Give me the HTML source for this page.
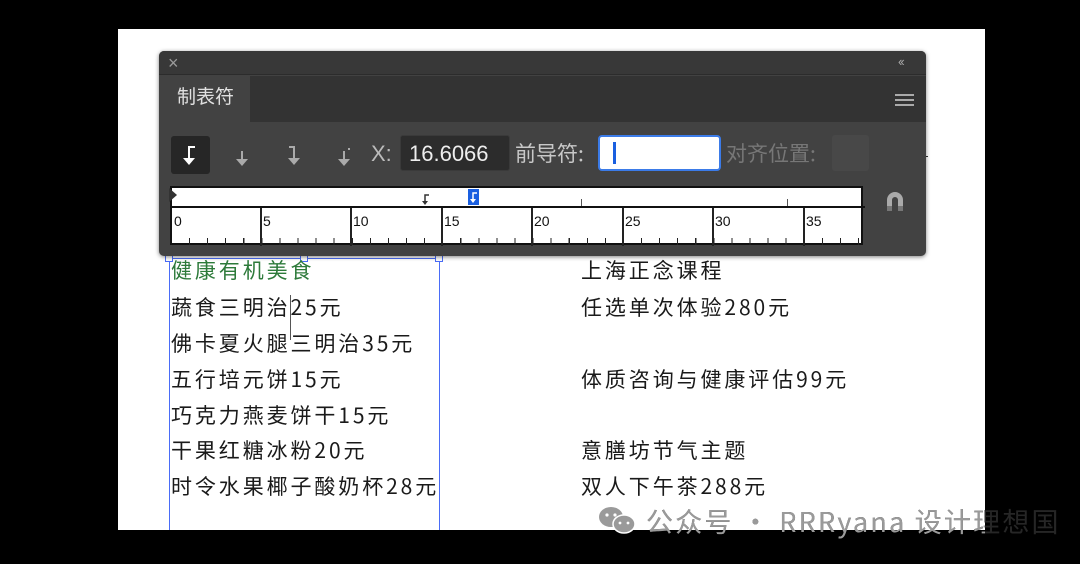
<!DOCTYPE html>
<html><head><meta charset="utf-8"><style>
*{margin:0;padding:0;box-sizing:border-box}
body{width:1080px;height:564px;background:#000;position:relative;overflow:hidden;font-family:"Liberation Sans","Noto Sans CJK SC",sans-serif}
.a{position:absolute}
.page{left:118px;top:29px;width:867px;height:501px;background:#fff}
.panel{left:159px;top:51px;width:767px;height:205px;background:#424242;border-radius:5px;overflow:hidden;box-shadow:0 1px 4px rgba(0,0,0,.5)}
.t{font-family:"Noto Sans CJK SC",sans-serif;font-size:21px;letter-spacing:2.9px;color:#1a1a1a;white-space:nowrap;line-height:24px}
.maj{position:absolute;top:0;width:2px;height:38px;background:#222}
.lab{position:absolute;top:5px;font-size:14px;color:#111}
.wm{position:absolute;left:646px;top:502px;font-family:'Noto Sans CJK SC',sans-serif;font-size:27px;line-height:38px;white-space:nowrap;letter-spacing:2.2px}
</style></head><body>
<div class="a page"></div>
<div class="a" style="left:918px;top:156px;width:10px;height:1px;background:#333"></div>

<div class="a" style="left:169px;top:258px;width:271px;height:272px;border:1px solid #4a6cf7;border-bottom:none"></div>
<div class="a" style="left:165px;top:254px;width:8px;height:8px;border:1px solid #4a6cf7;background:#fff"></div>
<div class="a" style="left:300px;top:254px;width:8px;height:8px;border:1px solid #4a6cf7;background:#fff"></div>
<div class="a" style="left:435px;top:254px;width:8px;height:8px;border:1px solid #4a6cf7;background:#fff"></div>
<div class="a" style="left:290px;top:295px;width:1px;height:45px;background:#555"></div>

<div class="a t" style="left:171px;top:258px;color:#2d7a3a">健康有机美食</div>
<div class="a t" style="left:171px;top:295px">蔬食三明治25元</div>
<div class="a t" style="left:171px;top:331px">佛卡夏火腿三明治35元</div>
<div class="a t" style="left:171px;top:367px">五行培元饼15元</div>
<div class="a t" style="left:171px;top:403px">巧克力燕麦饼干15元</div>
<div class="a t" style="left:171px;top:438px">干果红糖冰粉20元</div>
<div class="a t" style="left:171px;top:474px">时令水果椰子酸奶杯28元</div>

<div class="a t" style="left:581px;top:258px">上海正念课程</div>
<div class="a t" style="left:581px;top:295px">任选单次体验280元</div>
<div class="a t" style="left:581px;top:367px">体质咨询与健康评估99元</div>
<div class="a t" style="left:581px;top:438px">意膳坊节气主题</div>
<div class="a t" style="left:581px;top:474px">双人下午茶288元</div>

<svg class="a" style="left:597px;top:505px" width="42" height="30" viewBox="0 0 42 30"><ellipse cx="14" cy="12" rx="12" ry="10" fill="#9a9a9a"/><ellipse cx="27" cy="19" rx="11" ry="9" fill="#9a9a9a" stroke="#fff" stroke-width="1.5"/><circle cx="10" cy="10" r="1.6" fill="#fff"/><circle cx="18" cy="10" r="1.6" fill="#fff"/><circle cx="23" cy="18" r="1.4" fill="#fff"/><circle cx="31" cy="18" r="1.4" fill="#fff"/></svg>
<div class="wm" style="color:#262626">公众号 · RRRyana 设计理想国</div>
<div class="a" style="left:0;top:0;width:985px;height:564px;overflow:hidden">
  <div class="wm" style="color:#9a9a9a">公众号 · RRRyana 设计理想国</div>
</div>

<div class="a panel">
  <div class="a" style="left:0;top:0;width:767px;height:24px;background:#383838;border-bottom:1px solid #2c2c2c"></div>
  <div class="a" style="left:9px;top:2px;font-size:18px;color:#9a9a9a">×</div>
  <div class="a" style="left:739px;top:3px;font-size:13px;color:#aaa;letter-spacing:-2px">‹‹</div>
  <div class="a" style="left:0;top:25px;width:767px;height:46px;background:#333"></div>
  <div class="a" style="left:0;top:25px;width:91px;height:47px;background:#424242"></div>
  <div class="a" style="left:18px;top:31px;font-family:'Noto Sans CJK SC',sans-serif;font-size:19px;color:#e0e0e0">制表符</div>
  <div class="a" style="left:736px;top:43px;width:19px;height:2px;background:#aaa;box-shadow:0 5px 0 #aaa,0 10px 0 #aaa"></div>

  <div class="a" style="left:12px;top:85px;width:39px;height:38px;background:#262626;border-radius:3px"></div>
  <svg class="a" style="left:20px;top:90px" width="24" height="28" viewBox="0 0 24 28"><path d="M10 20V6h6" stroke="#fff" stroke-width="2" fill="none"/><path d="M4 17h12l-6 7z" fill="#fff"/></svg>
  <svg class="a" style="left:71px;top:90px" width="24" height="28" viewBox="0 0 24 28"><path d="M12 10v10" stroke="#aaa" stroke-width="2"/><path d="M6 18h12l-6 7z" fill="#aaa"/></svg>
  <svg class="a" style="left:123px;top:90px" width="24" height="28" viewBox="0 0 24 28"><path d="M7 6h5v14" stroke="#aaa" stroke-width="2" fill="none"/><path d="M6 17h12l-6 7z" fill="#aaa"/></svg>
  <svg class="a" style="left:173px;top:90px" width="24" height="28" viewBox="0 0 24 28"><path d="M12 10v10" stroke="#aaa" stroke-width="2"/><rect x="16" y="7" width="2" height="2" fill="#aaa"/><path d="M6 18h12l-6 7z" fill="#aaa"/></svg>
  <div class="a" style="left:212px;top:90px;font-size:22px;color:#bbb">X:</div>
  <div class="a" style="left:241px;top:84px;width:110px;height:36px;background:#2c2c2c;border:1px solid #3a3a3a;border-radius:3px;color:#eee;font-size:22px;padding:5px 0 0 8px">16.6066</div>
  <div class="a" style="left:356px;top:87px;font-family:'Noto Sans CJK SC',sans-serif;font-size:21px;color:#c8c8c8">前导符:</div>
  <div class="a" style="left:439px;top:84px;width:123px;height:36px;background:#fff;border:2px solid #3b7be8;border-radius:4px"></div>
  <div class="a" style="left:454px;top:91px;width:3px;height:22px;background:#1a5fe0"></div>
  <div class="a" style="left:567px;top:87px;font-family:'Noto Sans CJK SC',sans-serif;font-size:21px;color:#777">对齐位置:</div>
  <div class="a" style="left:673px;top:84px;width:37px;height:36px;background:#484848;border-radius:3px"></div>
  <svg class="a" style="left:724px;top:138px" width="24" height="24" viewBox="0 0 24 24"><path d="M4 22V11a8 8 0 0 1 16 0v11h-5V11a3 3 0 0 0-6 0v11z" fill="#aaa"/><rect x="4" y="17" width="5" height="5" fill="#777"/><rect x="15" y="17" width="5" height="5" fill="#777"/></svg>

  <div class="a" style="left:11px;top:135px;width:693px;height:59px;background:#fff;border:2px solid #111">
    <div class="a" style="left:0;top:18px;width:693px;height:2px;background:#111"></div>
    <svg class="a" style="left:-3px;top:0" width="10" height="14"><path d="M0 0l8 7-8 7z" fill="#333"/></svg>
    <svg class="a" style="left:249px;top:5px" width="10" height="12"><path d="M4 10V2h4" stroke="#333" stroke-width="1.5" fill="none"/><path d="M1 8h6l-3 4z" fill="#333"/></svg>
    <div class="a" style="left:296px;top:1px;width:11px;height:16px;background:#1a5fe0"></div>
    <svg class="a" style="left:296px;top:2px" width="11" height="14"><path d="M5 11V3h4" stroke="#fff" stroke-width="1.5" fill="none"/><path d="M2 9h6l-3 4z" fill="#fff"/></svg>
    <div class="a" style="left:409px;top:11px;width:1px;height:7px;background:#555"></div>
    <div class="a" style="left:615px;top:11px;width:1px;height:7px;background:#555"></div>
    <div class="a" style="left:0;top:20px;width:693px;height:37px;background:repeating-linear-gradient(90deg,transparent 0,transparent 17px,#222 17px,#222 18.08px);-webkit-mask:linear-gradient(transparent 30px,#000 30px);mask:linear-gradient(transparent 30px,#000 30px)"></div>
    <div class="a" style="left:0;top:20px;width:693px;height:37px">
      <div class="maj" style="left:88px"></div><div class="maj" style="left:178px"></div><div class="maj" style="left:269px"></div><div class="maj" style="left:359px"></div><div class="maj" style="left:450px"></div><div class="maj" style="left:540px"></div><div class="maj" style="left:631px"></div>
      <div class="lab" style="left:2px">0</div><div class="lab" style="left:91px">5</div><div class="lab" style="left:181px">10</div><div class="lab" style="left:272px">15</div><div class="lab" style="left:362px">20</div><div class="lab" style="left:453px">25</div><div class="lab" style="left:543px">30</div><div class="lab" style="left:634px">35</div>
    </div>
  </div>
</div>
</body></html>
